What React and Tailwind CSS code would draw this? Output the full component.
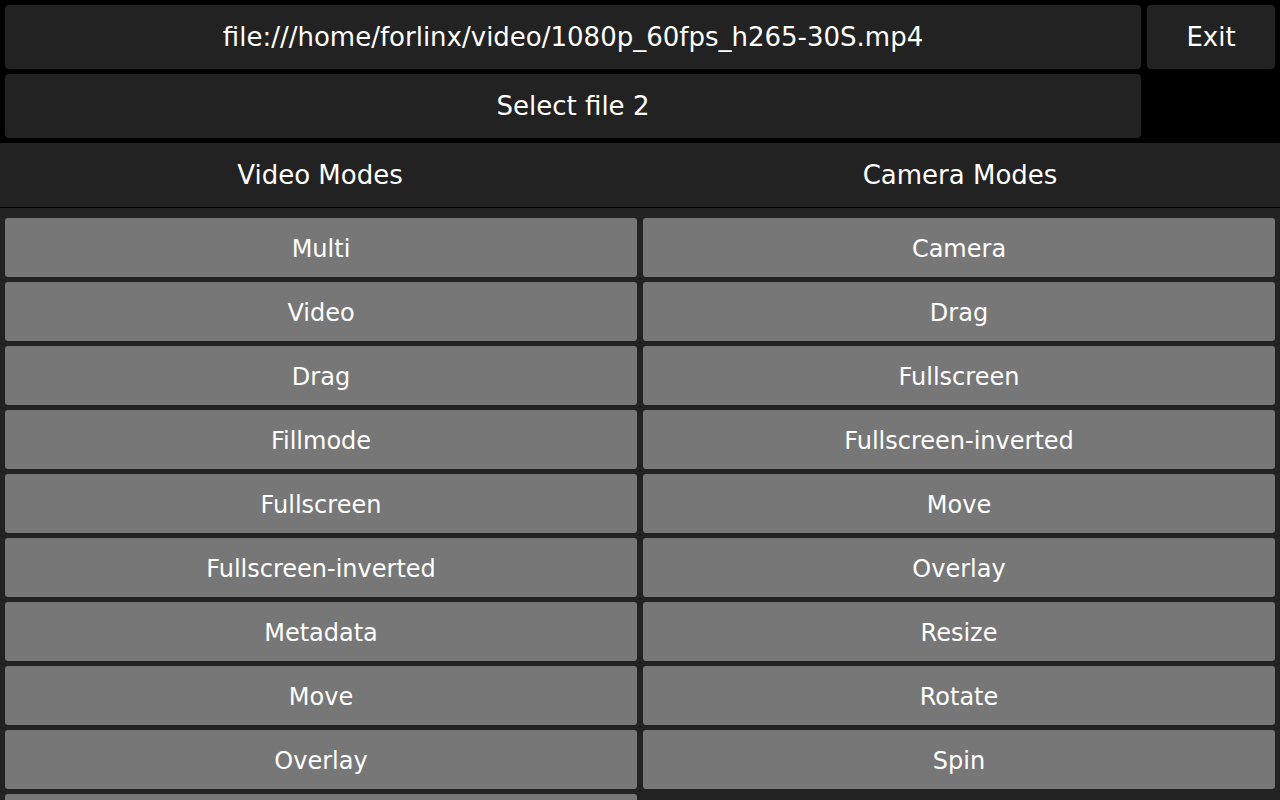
import React from "react";

const videoModes = [
  "Multi",
  "Video",
  "Drag",
  "Fillmode",
  "Fullscreen",
  "Fullscreen-inverted",
  "Metadata",
  "Move",
  "Overlay",
  "Resize",
  "Rotate",
];

const cameraModes = [
  "Camera",
  "Drag",
  "Fullscreen",
  "Fullscreen-inverted",
  "Move",
  "Overlay",
  "Resize",
  "Rotate",
  "Spin",
];

function ModeButton({ label }) {
  return (
    <button
      type="button"
      className="h-[59px] w-full shrink-0 rounded-[3px] bg-[#777777] pt-[2px] text-[24px] text-white"
    >
      {label}
    </button>
  );
}

export default function App() {
  return (
    <div
      className="h-[800px] w-[1280px] overflow-hidden bg-black flex flex-col"
      style={{ fontFamily: '"DejaVu Sans", "Liberation Sans", sans-serif' }}
    >
      {/* top: file pickers + exit */}
      <div className="grid grid-cols-[1fr_128px] grid-rows-[64px_64px] gap-x-[6px] gap-y-[5px] p-[5px]">
        <button
          type="button"
          className="rounded-[4px] bg-[#222222] text-[26px] text-white"
        >
          file:///home/forlinx/video/1080p_60fps_h265-30S.mp4
        </button>
        <button
          type="button"
          className="rounded-[4px] bg-[#222222] text-[26px] text-white"
        >
          Exit
        </button>
        <button
          type="button"
          className="rounded-[4px] bg-[#222222] text-[26px] text-white"
        >
          Select file 2
        </button>
        <div />
      </div>

      {/* tabs */}
      <div className="flex h-[65px] shrink-0 bg-[#222222] border-b border-black">
        <div className="flex flex-1 items-center justify-center text-[26px] text-white">
          Video Modes
        </div>
        <div className="flex flex-1 items-center justify-center text-[26px] text-white">
          Camera Modes
        </div>
      </div>

      {/* mode lists */}
      <div className="flex flex-1 gap-[6px] bg-[#222222] px-[5px] pt-[10px] overflow-hidden">
        <div className="flex flex-1 flex-col gap-[5px]">
          {videoModes.map((m) => (
            <ModeButton key={m} label={m} />
          ))}
        </div>
        <div className="flex flex-1 flex-col gap-[5px]">
          {cameraModes.map((m) => (
            <ModeButton key={m} label={m} />
          ))}
        </div>
      </div>
    </div>
  );
}
